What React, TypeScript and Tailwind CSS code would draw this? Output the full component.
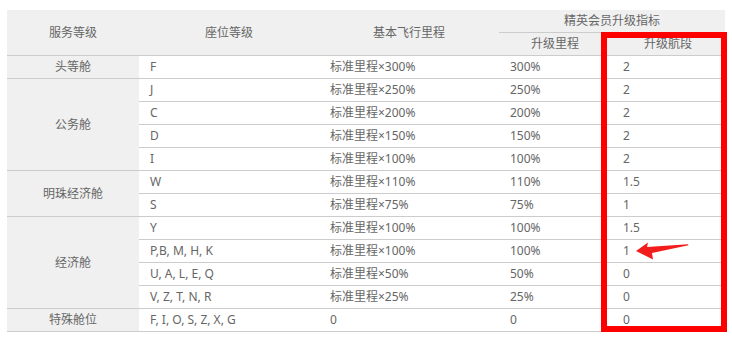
import React from "react";

const rows: { cls: string; a: string; b: string; c: string }[] = [
  { cls: "F", a: "标准里程×300%", b: "300%", c: "2" },
  { cls: "J", a: "标准里程×250%", b: "250%", c: "2" },
  { cls: "C", a: "标准里程×200%", b: "200%", c: "2" },
  { cls: "D", a: "标准里程×150%", b: "150%", c: "2" },
  { cls: "I", a: "标准里程×100%", b: "100%", c: "2" },
  { cls: "W", a: "标准里程×110%", b: "110%", c: "1.5" },
  { cls: "S", a: "标准里程×75%", b: "75%", c: "1" },
  { cls: "Y", a: "标准里程×100%", b: "100%", c: "1.5" },
  { cls: "P,B, M, H, K", a: "标准里程×100%", b: "100%", c: "1" },
  { cls: "U, A, L, E, Q", a: "标准里程×50%", b: "50%", c: "0" },
  { cls: "V, Z, T, N, R", a: "标准里程×25%", b: "25%", c: "0" },
  { cls: "F, I, O, S, Z, X, G", a: "0", b: "0", c: "0" },
];

const groups: { name: string; start: number; span: number }[] = [
  { name: "头等舱", start: 0, span: 1 },
  { name: "公务舱", start: 1, span: 4 },
  { name: "明珠经济舱", start: 5, span: 2 },
  { name: "经济舱", start: 7, span: 4 },
  { name: "特殊舱位", start: 11, span: 1 },
];

const rowSpanClass: Record<number, string> = {
  1: "row-span-1",
  2: "row-span-2",
  4: "row-span-4",
};

export default function App() {
  const cell = "border-b border-[#cccccc] flex items-center pl-[11px] whitespace-nowrap";
  return (
    <div
      className="bg-white w-[732px] h-[337px] pt-[10px] pl-[7px] text-[12px] text-[#666666]"
      style={{ fontFamily: '"Noto Sans", "Noto Sans CJK SC", sans-serif' }}
    >
      <div className="relative w-[718px]">
        <div className="grid grid-cols-[132px_180px_180px_112px_114px] auto-rows-[23px]">
          {/* header */}
          <div className="row-span-2 col-start-1 row-start-1 bg-[#f0f0f0] border-b border-[#cccccc] flex items-center justify-center">服务等级</div>
          <div className="row-span-2 col-start-2 row-start-1 bg-[#f0f0f0] border-b border-[#cccccc] flex items-center justify-center">座位等级</div>
          <div className="row-span-2 col-start-3 row-start-1 bg-[#f0f0f0] border-b border-[#cccccc] flex items-center justify-center">基本飞行里程</div>
          <div className="col-span-2 col-start-4 row-start-1 bg-[#f0f0f0] border-b border-[#cccccc] flex items-center justify-center">精英会员升级指标</div>
          <div className="col-start-4 row-start-2 bg-[#f0f0f0] border-b border-[#cccccc] flex items-center justify-center">升级里程</div>
          <div className="col-start-5 row-start-2 bg-[#f0f0f0] border-b border-[#cccccc] flex items-center justify-center">升级航段</div>

          {groups.map((g) => (
            <div
              key={g.name}
              className={`col-start-1 ${rowSpanClass[g.span]} bg-[#f0f0f0] border-b border-[#cccccc] flex items-center justify-center`}
              style={{ gridRowStart: g.start + 3 }}
            >
              {g.name}
            </div>
          ))}

          {rows.map((r, i) => (
            <React.Fragment key={i}>
              <div className={`col-start-2 ${cell} pl-[10px]`} style={{ gridRowStart: i + 3 }}>{r.cls}</div>
              <div className={`col-start-3 ${cell}`} style={{ gridRowStart: i + 3 }}>{r.a}</div>
              <div className={`col-start-4 ${cell}`} style={{ gridRowStart: i + 3 }}>{r.b}</div>
              <div className={`col-start-5 ${cell} pl-[12px]`} style={{ gridRowStart: i + 3 }}>{r.c}</div>
            </React.Fragment>
          ))}
        </div>

        {/* red highlight box */}
        <div className="absolute left-[594px] top-[22px] w-[126px] h-[300px] border-[6px] border-[#ff0000] pointer-events-none" />

        {/* arrow */}
        <svg
          className="absolute left-[627px] top-[230px]"
          width="56"
          height="22"
          viewBox="0 0 56 22"
        >
          <path d="M2 11 L14 2.5 L13 7 L54 4.2 L54.5 5.2 L18 13 L19 19.5 Z" fill="#f21c1c" />
        </svg>
      </div>
    </div>
  );
}
